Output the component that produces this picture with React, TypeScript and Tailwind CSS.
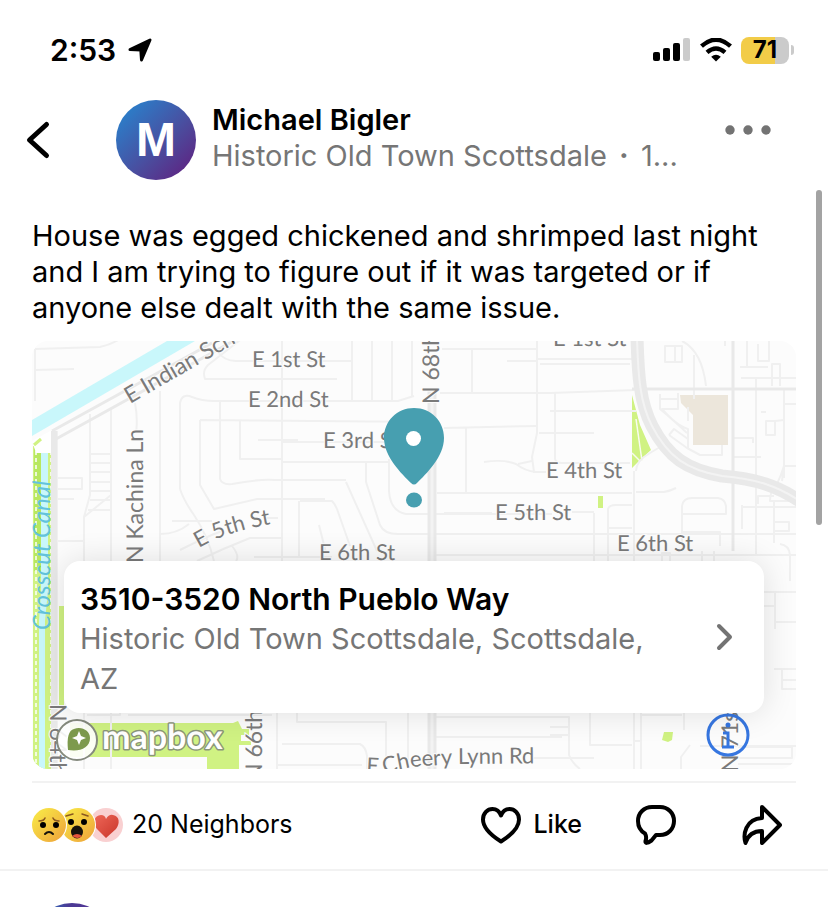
import { useState } from "react";

const STREETS = [
  // north-west blocks
  "M3 8V60 M3 8L68 6Q78 4 88 -2 M3 29L42 28",
  "M25 90V428 M58 73V154L52 176V428 M79 68V154L52 176 M79 154V428 M58 113H79 M58 122H79 M58 131H79 M58 141H79 M58 150H79 M58 159H79 M56 169H79",
  "M25 137H50V148H25 M25 158H42 M25 200H52 M103 62Q106 78 104 92 M128 50V220",
  "M212 -4L176 24Q170 30 173 38H305 M185 10Q192 20 204 20H250 M250 0V220",
  "M148 148V62Q150 52 160 56Q170 60 182 60H366L382 55 M148 148Q152 160 162 174Q176 195 182 220 M168 79L400 81 M168 79V144L182 168L225 158H293 M188 60V138Q190 144 200 143Q225 138 243 139H314",
  "M208 80V118H250 M226 99H266 M250 121H356 M250 101H352 M128 193Q145 193 157 183 M148 209Q176 195 190 190 M232 177H246 M165 220Q190 208 218 197H250 M222 216H300 M200 205Q208 215 204 220",
  "M320 20H250 M320 0V60 M340 0V60 M360 0V60 M380 0V56 M314 141L345 210 M334 121V141L348 184Q352 193 366 193H764 M357 118V150Q358 170 374 173H520 M268 160H300Q303 163 305 168L318 205 M267 160V215 M287 184L294 212",
  // between 68th and the avenue
  "M410 8H505 M475 20H505 M440 8V52 M408 52H518L604 49 M505 0V92L500 116L502 131H514 M505 18H600 M508 23H598 M508 -1H560",
  "M412 87L505 85 M434 86V151 M452 121Q472 118 484 123Q493 130 504 131 M486 123L500 120 M405 152H600 M412 172H460 M400 214H764 M507 92H562 M523 52V118Q524 122 530 122H598 M518 70H604",
  "M604 130Q604 120 618 112L628 106 M602 130V428 M604 151H632Q638 150 644 147 M562 172V220 M576 220V168Q577 164 584 164H600 M576 187H600 M540 171H562",
  // east side
  "M633 5H650V21H633Z M643 5V21 M662 14V58 M650 0Q670 10 674 45 M715 0V26 M708 26H736 M726 3V20H737V0 M709 37H764 M724 37V214 M740 45V23H748V45 M740 37H764 M752 47V137 M764 63H752",
  "M628 53V68Q640 78 655 92 M628 58H646 M646 52V68H630Q645 85 656 88V107 M637 94L655 107L668 114H690V104 M637 94L642 88L656 98 M656 66V80",
  "M729 71H734 M734 80H743V94H734Z M743 80L752 79 M701 97H721V102 M701 116H729 M764 125H752Q749 135 744 145Q738 150 738 160H764 M726 163V155H742 M709 166H764 M710 164V188 M742 160V202 M742 181H757V190H742Z M752 125L750 140",
  "M650 205V165Q651 157 660 157H686Q693 158 694 165V173H650 M650 191H688V205 M670 210V220 M682 210V220 M693 -2V5 M748 203Q757 204 758 214V240 M630 220V212H638V220",
  // south side, around the address card
  "M732 265H742 M743 251V288 M743 281H764 M742 328H764 M750 328V348H764 M750 339H764 M732 251H764",
  "M265 370V381H354V424 M250 403H328Q334 406 335 415V428 M246 424H330 M376 370V420 M402 376H530 M402 396H530 M500 417H562 M245 372V428",
  "M518 376H537V414Q540 422 548 428 M538 386H518 M558 372V404H600 M518 394H537 M602 400H609 M609 372V428 M609 374H650 M652 372V389 M649 428V416L658 404 M668 405H764 M706 406H760V417H706 M706 423H764",
  "M55 374H88V366 M96 374H240 M140 180H180",
];

const LABELS = [
  { text: "E 1st St", x: 220, y: 26 },
  { text: "E 2nd St", x: 216, y: 66 },
  { text: "E 3rd St", x: 291, y: 107 },
  { text: "E 4th St", x: 514, y: 137 },
  { text: "E 5th St", x: 463, y: 179 },
  { text: "E 6th St", x: 585, y: 210 },
  { text: "E 6th St", x: 287, y: 219 },
  { text: "E 1st St", x: 521, y: 5 },
];

const TURNED_LABELS = [
  { text: "E Indian School Rd", at: "translate(98 63) rotate(-30)" },
  { text: "N Kachina Ln", at: "translate(111 222) rotate(-90)" },
  { text: "N 68th St", at: "translate(407 63) rotate(-90)" },
  { text: "N 64th St", at: "translate(18 363) rotate(90)" },
  { text: "N 66th", at: "translate(230 440) rotate(-90)" },
  { text: "N 71st", at: "translate(706 431) rotate(-90)" },
];

function StatusBar() {
  return (
    <div className="flex items-center justify-between pt-8 pr-[34px] pl-[50px]">
      <div className="flex items-center gap-3">
        <span className="text-[30px] leading-9 font-semibold">2:53</span>
        <svg className="h-6 w-6" viewBox="0 0 24 24" aria-hidden="true">
          <path d="M22 2 13.500 22 12.800 12 2 11.500Z" stroke="#000" strokeWidth="3" strokeLinejoin="round" />
        </svg>
      </div>
      <div className="flex items-center gap-[9px]">
        <svg className="h-6 w-[38px]" viewBox="0 0 38 24" aria-hidden="true">
          <rect x="0" y="14" width="7" height="9" rx="2" />
          <rect x="10" y="10" width="7" height="13" rx="2" />
          <rect x="20" y="5" width="7" height="18" rx="2" />
          <rect x="30" y="0" width="7" height="23" rx="2" fill="#cbcbcb" />
        </svg>
        <svg className="h-6 w-8" viewBox="0 0 32 24" aria-hidden="true">
          <path d="M1.500 8.200Q16-4.800 30.500 8.200" fill="none" stroke="#000" strokeWidth="4.400" />
          <path d="M7 14.400Q16 6.600 25 14.400" fill="none" stroke="#000" strokeWidth="4.400" />
          <path d="M16 23.500 11.200 18.800Q16 14.800 20.800 18.800Z" />
        </svg>
        <div className="flex items-center gap-0.5">
          <div className="flex h-[27px] w-12 items-center justify-center rounded-lg bg-[linear-gradient(90deg,#f2cc48_71%,#cbcbcb_71%)] text-2xl font-bold">
            71
          </div>
          <div className="h-2.5 w-[3px] rounded-r-full bg-[#cbcbcb]" />
        </div>
      </div>
    </div>
  );
}

function PostHeader() {
  return (
    <header className="flex h-[112px] items-center pr-14 pl-6">
      <button aria-label="Back" className="mr-16 shrink-0">
        <svg className="h-10 w-7" viewBox="0 0 28 40" fill="none" stroke="#000" strokeWidth="5" strokeLinecap="round" strokeLinejoin="round">
          <path d="M22.500 4.500 5.500 20 22.500 35.500" />
        </svg>
      </button>
      <div className="flex h-20 w-20 shrink-0 items-center justify-center rounded-full bg-[linear-gradient(135deg,#2a80cb_10%,#4c4a9c_60%,#602080_95%)] font-['Liberation_Sans',sans-serif] text-5xl font-bold text-white">
        M
      </div>
      <div className="mb-1 ml-4 min-w-0">
        <h1 className="text-[29px] leading-9 font-semibold">Michael Bigler</h1>
        <p className="text-[29px] leading-9 whitespace-nowrap text-[#767676]">
          Historic Old Town Scottsdale <span className="mx-1 font-bold">·</span> 1...
        </p>
      </div>
      <button aria-label="More options" className="mb-5 ml-auto shrink-0">
        <svg className="h-5 w-12" viewBox="0 0 48 20" fill="#737373">
          <circle cx="6" cy="10" r="4.700" />
          <circle cx="24" cy="10" r="4.700" />
          <circle cx="42" cy="10" r="4.700" />
        </svg>
      </button>
    </header>
  );
}

function StreetMap() {
  return (
    <svg
      className="absolute inset-0 h-full w-full font-[Lato,sans-serif]"
      viewBox="0 0 764 428"
      preserveAspectRatio="xMidYMid slice"
      textRendering="geometricPrecision"
      role="img"
      aria-label="Map of Historic Old Town Scottsdale"
    >
      <rect width="764" height="428" fill="#fcfcfc" />

      {/* parks */}
      <g fill="#d0f283">
        <path d="M1 105H19V428H1Z" />
        <path d="M27 265H32V365H27Z" />
        <path d="M38 382H201L206 380 210 388H217V394H209V400H219V404H207V428H175V416H38Z" />
        <path d="M600 54 608 84 619 109 609 118 600 127Z" />
        <path d="M566 155H571V167H566Z" />
        <path d="M632 391H641L640 399 636 401 630 399Z" />
      </g>
      <path d="M2 105H9V230H2Z" fill="#b8e85f" />
      <path d="M604 78 610 120 M600 112 608 120" stroke="#f8fbef" strokeWidth="1.500" fill="none" />
      <path d="M648 54H696V104H661V74L649 62Z" fill="#ece6db" />

      {/* canals */}
      <path d="M0 79 135 0H163L0 95Z" fill="#c9f7fb" />
      <path d="M9 104H16V250L13 280V428H7V280L9 250Z" fill="#c9f7fb" />
      <path d="M4 110V428 M19 110V425" stroke="#fff" strokeWidth="1.500" strokeDasharray="4 3" />
      <path d="M0 100 22 88V112H4Z" fill="#fff" />
      <path d="M2 104 9 98" stroke="#d0f283" strokeWidth="3" />

      {STREETS.map((d) => (
        <path key={d} d={d} fill="none" stroke="#f0f0f0" strokeWidth="2" strokeLinejoin="round" />
      ))}

      {/* arterials */}
      <g fill="none" stroke="#e9e9e9">
        <path d="M20 90 180 2 M24 98 205 -2" strokeWidth="3" />
        <path d="M22 90V428" strokeWidth="6" />
        <path d="M400 50V428" strokeWidth="9" />
        <path d="M600 48H764 M701 0V210" strokeWidth="3" />
        <path d="M605 -4C606 35 608 62 620 85C636 116 655 129 690 135C725 138 745 145 768 160" strokeWidth="13" />
      </g>
      <path d="M400 50V428" stroke="#f3f3f3" strokeWidth="3" />
      <path
        d="M605 -4C606 35 608 62 620 85C636 116 655 129 690 135C725 138 745 145 768 160"
        fill="none"
        stroke="#f3f3f3"
        strokeWidth="2"
      />

      <g fill="#7a7a7a" stroke="#fcfcfc" strokeWidth="2" paintOrder="stroke">
        {LABELS.map((l) => (
          <text key={`${l.x}-${l.y}`} x={l.x} y={l.y} fontSize="22">
            {l.text}
          </text>
        ))}
        {TURNED_LABELS.map((l) => (
          <text key={l.text} transform={l.at} fontSize="23">
            {l.text}
          </text>
        ))}
        <path id="fifth" d="M167 207Q193 191 240 183" fill="none" stroke="none" />
        <path id="cheery" d="M334 432L352 433Q374 426 392 425T430 423L540 422" fill="none" stroke="none" />
        <text fontSize="22">
          <textPath href="#fifth">E 5th St</textPath>
        </text>
        <text fontSize="22">
          <textPath href="#cheery">E Cheery Lynn Rd</textPath>
        </text>
      </g>
      <text transform="translate(18 289) rotate(-90)" fill="#62c3dc" fontSize="24" fontStyle="italic">
        Crosscut Canal
      </text>

      {/* pin */}
      <g fill="#479fb0">
        <path d="M382 67C399 67 412 80 412 97C412 116 394 133 385 142Q382 145 379 142C370 133 352 116 352 97C352 80 365 67 382 67Z" />
        <ellipse cx="382" cy="159" rx="8" ry="7.500" />
      </g>
      <circle cx="381.500" cy="97.500" r="7.500" fill="#fff" />

      {/* mapbox mark */}
      <circle cx="45" cy="399" r="20" fill="#fff" fillOpacity="0.900" stroke="#858a7e" strokeWidth="2" />
      <path d="M36 409Q34 390 42 388C50 385 58 390 58 397C58 407 48 411 36 409Z" fill="#7d9a4d" />
      <path d="M47 390 49 395 54 397 49 399 47 404 45 399 40 397 45 395Z" fill="#fff" />
      <text
        x="70"
        y="408"
        fontSize="34"
        fontWeight="700"
        fill="#fff"
        stroke="#8b967a"
        strokeWidth="3"
        strokeLinejoin="round"
        paintOrder="stroke"
      >
        mapbox
      </text>

      {/* attribution */}
      <g fill="none" stroke="#3676e0" strokeWidth="3">
        <circle cx="696" cy="394" r="20" />
        <path d="M691 392H696V405 M690 406H702" />
        <circle cx="696" cy="384" r="2.500" fill="#3676e0" stroke="none" />
      </g>
    </svg>
  );
}

function LocationCard() {
  return (
    <a
      href="#location"
      className="absolute inset-x-8 bottom-14 flex items-center rounded-2xl bg-white pt-[18px] pr-[30px] pb-3.5 pl-4 shadow-[0_0_32px_rgba(0,0,0,0.12)]"
    >
      <div className="min-w-0 flex-1">
        <h2 className="text-[30px] leading-10 font-semibold">3510-3520 North Pueblo Way</h2>
        <p className="max-w-[600px] text-[29px] leading-10 text-[#767676]">
          Historic Old Town Scottsdale, Scottsdale, AZ
        </p>
      </div>
      <svg className="mb-1 h-7 w-5" viewBox="0 0 20 28" fill="none" stroke="#737373" strokeWidth="4" strokeLinecap="round" strokeLinejoin="round" aria-hidden="true">
        <path d="M5 3 16 14 5 25" />
      </svg>
    </a>
  );
}

function Reactions() {
  return (
    <svg className="h-9 w-[92px]" viewBox="0 0 92 36" aria-hidden="true">
      <defs>
        <linearGradient id="face" x1="0" y1="0" x2="1" y2="1">
          <stop offset="0.200" stopColor="#f7df45" />
          <stop offset="1" stopColor="#eea13a" />
        </linearGradient>
        <linearGradient id="love" x1="0" y1="0" x2="1" y2="1">
          <stop offset="0" stopColor="#ee6657" />
          <stop offset="1" stopColor="#c9362b" />
        </linearGradient>
      </defs>
      <circle cx="74" cy="18" r="17" fill="#f9d0d1" />
      <path d="M74 31 65 22C60 17 62 8 69 8Q73 8 74 12Q77 7 81 8C88 9 88 17 84 22Z" fill="url(#love)" />
      <circle cx="46" cy="18" r="18" fill="#fff" />
      <circle cx="46" cy="18" r="17" fill="url(#face)" />
      <circle cx="39" cy="15" r="3" />
      <circle cx="52" cy="15" r="3" />
      <path d="M34 9 41 7 M50 7 56 9" stroke="#8a5820" strokeWidth="1.500" fill="none" strokeLinecap="round" />
      <ellipse cx="45" cy="25" rx="6" ry="6.500" fill="#17130c" />
      <path d="M40 29Q45 25 50 29Q46 33 40 29Z" fill="#e4553e" />
      <circle cx="17" cy="18" r="18" fill="#fff" />
      <circle cx="17" cy="18" r="17" fill="url(#face)" />
      <circle cx="11" cy="18" r="3" />
      <circle cx="24" cy="18" r="3" />
      <path d="M7 14Q12 14 13 11 M21 11Q22 14 27 14" stroke="#8a5820" strokeWidth="1.500" fill="none" strokeLinecap="round" />
      <path d="M13 27Q17 23 21 27" stroke="#17130c" strokeWidth="2" fill="none" strokeLinecap="round" />
    </svg>
  );
}

function PostActions() {
  const [liked, setLiked] = useState(false);

  return (
    <div className="flex h-[86px] items-center pr-[46px] pb-0.5 pl-8">
      <Reactions />
      <span className="ml-2 text-[25px]">20 Neighbors</span>
      <button
        className="ml-auto flex items-center gap-3 text-[25px] font-medium"
        aria-pressed={liked}
        onClick={() => setLiked((l) => !l)}
      >
        <svg className="h-10 w-10" viewBox="0 0 40 40" fill={liked ? "#000" : "none"} stroke="#000" strokeWidth="4" strokeLinejoin="round">
          <path d="M20 36.500C12 31.500 2 24 2 14.500C2 8 6.500 4 11.500 4C15.500 4 18.500 6.500 20 10.500C21.500 6.500 24.500 4 28.500 4C33.500 4 38 8 38 14.500C38 24 28 31.500 20 36.500Z" />
        </svg>
        Like
      </button>
      <button aria-label="Comment" className="ml-[54px]">
        <svg className="h-10 w-10" viewBox="0 0 40 40" fill="none" stroke="#000" strokeWidth="4" strokeLinejoin="round">
          <path d="M16 2H24C32 2 38 8 38 16S32 30 24 30H20L15.500 35.500Q9 40 9.500 36Q11 32 9 28.500C4.500 26 2 22 2 16C2 8 8 2 16 2Z" />
        </svg>
      </button>
      <button aria-label="Share" className="ml-[66px]">
        <svg className="h-10 w-10" viewBox="0 0 40 40" fill="none" stroke="#000" strokeWidth="4" strokeLinejoin="round">
          <path d="M20 2 38 20 20 38V26C12 26 6 30 3.500 38C1 30 3 14 20 13Z" />
        </svg>
      </button>
    </div>
  );
}

export default function App() {
  return (
    <main className="relative h-screen overflow-hidden bg-white font-[Inter,sans-serif] text-black">
      <StatusBar />
      <div className="mt-4">
        <PostHeader />
      </div>
      <p className="mt-[22px] px-8 text-[29px] leading-9">
        House was egged chickened and shrimped last night and I am trying to figure out if it was targeted or if anyone
        else dealt with the same issue.
      </p>
      <section className="relative mx-8 mt-[15px] h-[428px] overflow-hidden rounded-2xl">
        <StreetMap />
        <LocationCard />
      </section>
      <div className="mx-8 mt-3 border-t-2 border-[#f2f2f2]" />
      <PostActions />
      <div className="border-t-2 border-[#f2f2f2]" />
      <div className="mt-8 ml-8 h-20 w-20 rounded-full bg-[linear-gradient(90deg,#2f6fc0_20%,#4a3a94_45%,#5a3296)]" />
      <div className="absolute top-[190px] right-1.5 h-[335px] w-1.5 rounded-full bg-[#a3a3a3]" />
    </main>
  );
}
